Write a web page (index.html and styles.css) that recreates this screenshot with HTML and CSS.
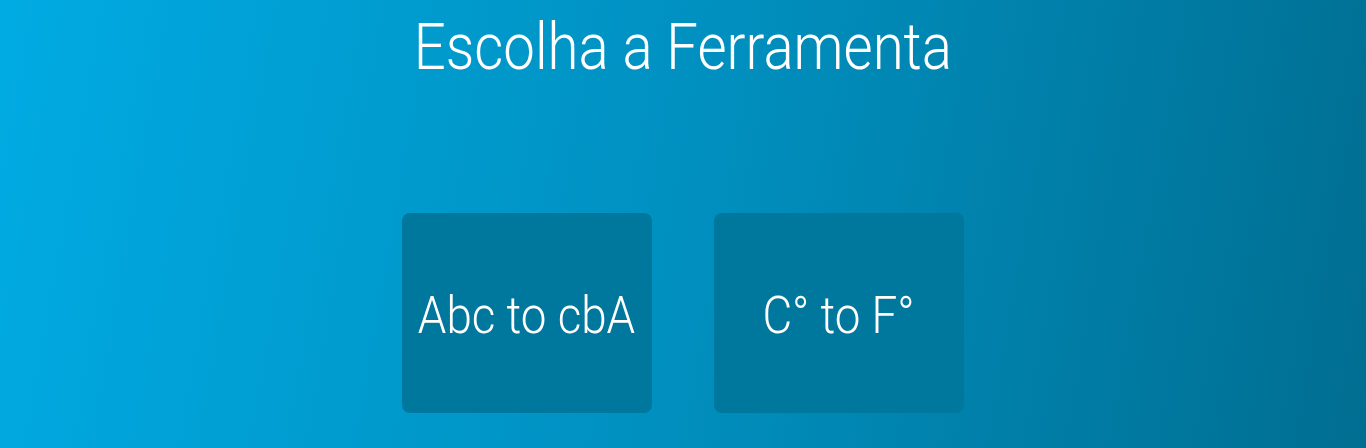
FILE: index.html
```html
<!DOCTYPE html>
<html lang="pt">
<head>
<meta charset="utf-8">
<title>Escolha a Ferramenta</title>
<link rel="stylesheet" href="styles.css">
</head>
<body>
<main class="page">
  <h1 class="title"><span class="cond">Escolha a Ferramenta</span></h1>
  <div class="tools">
    <a class="tool" href="#"><span class="cond">Abc to cbA</span></a>
    <a class="tool" href="#"><span class="cond">C° to F°</span></a>
  </div>
</main>
</body>
</html>
```
FILE: styles.css
```css
html, body {
  margin: 0;
  padding: 0;
  height: 100%;
}
body {
  background: linear-gradient(100deg, #00abe3 0%, #0090c0 50%, #006e91 100%);
  font-family: Roboto, "Liberation Sans", sans-serif;
  font-weight: 300;
  color: #ffffff;
  overflow: hidden;
}
.page {
  display: flex;
  flex-direction: column;
  align-items: center;
}
.cond {
  display: inline-block;
  transform: scaleX(0.88);
  white-space: nowrap;
}
.title {
  margin: 10px 0 0;
  font-size: 64px;
  font-weight: 300;
  line-height: 76px;
}
.tools {
  display: flex;
  gap: 62px;
  margin-top: 127px;
}
.tool {
  width: 250px;
  height: 200px;
  border-radius: 8px;
  background: #00779c;
  color: #ffffff;
  text-decoration: none;
  display: flex;
  align-items: center;
  justify-content: center;
  font-size: 52px;
  font-weight: 300;
  padding-top: 4px;
  box-sizing: border-box;
}
```
